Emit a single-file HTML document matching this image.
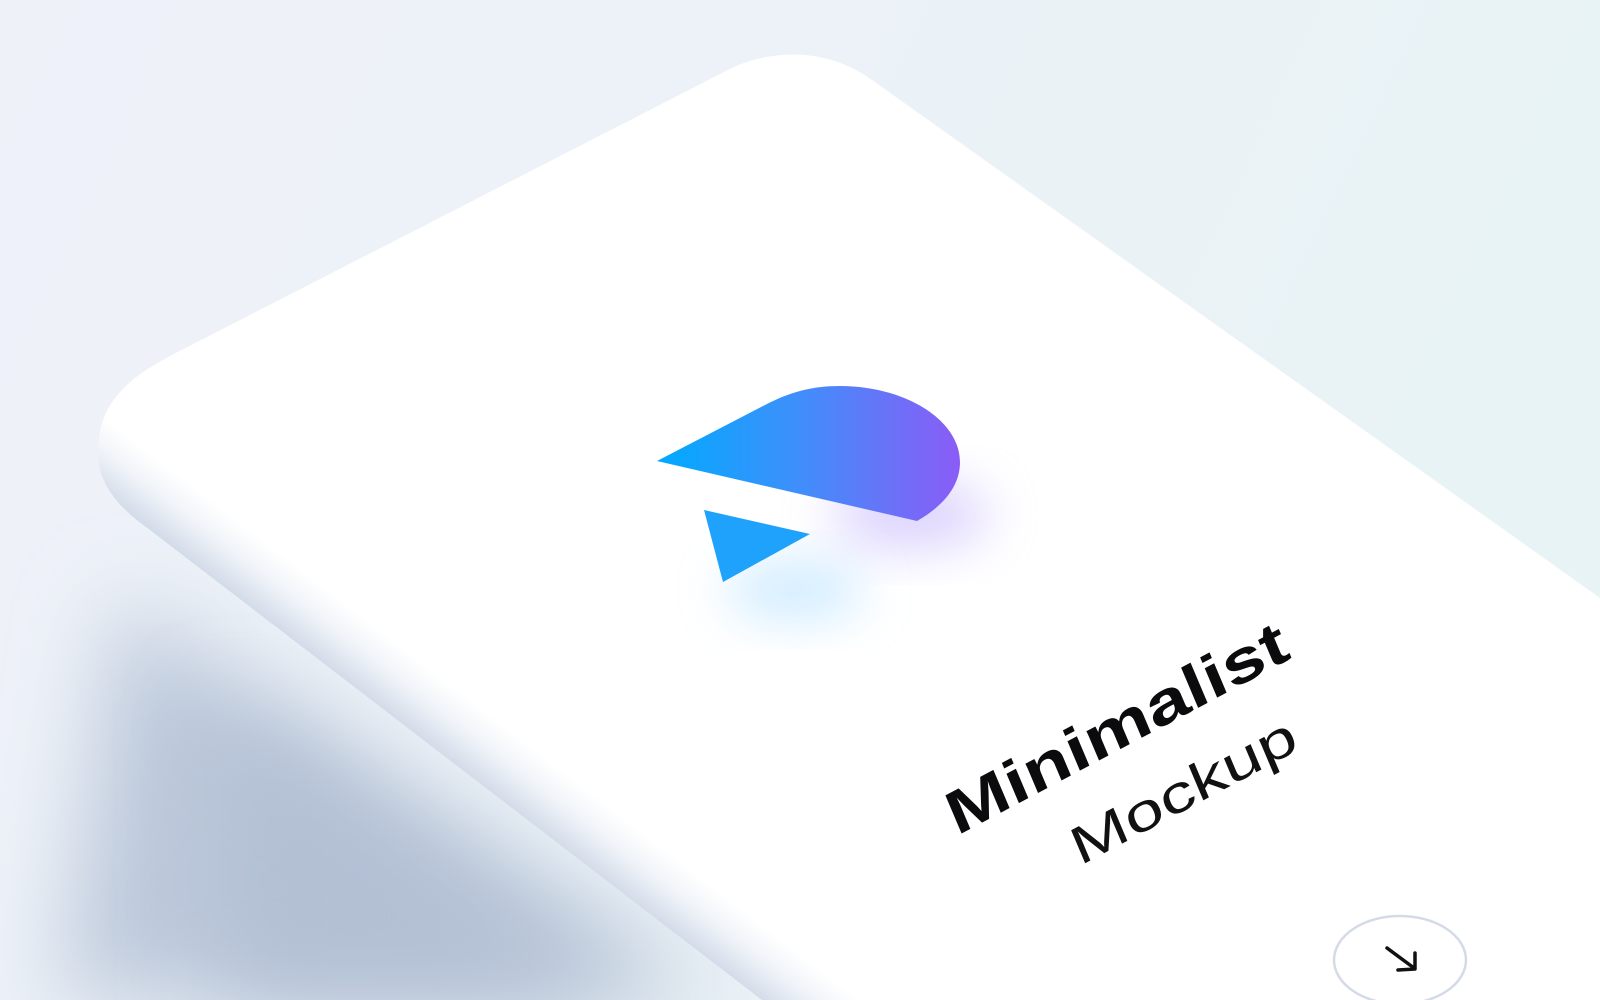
<!DOCTYPE html>
<html><head><meta charset="utf-8"><style>
html,body{margin:0;padding:0;width:1600px;height:1000px;overflow:hidden;background:#eef1f8}
svg{display:block}
</style></head><body>
<svg width="1600" height="1000" viewBox="0 0 1600 1000" xmlns="http://www.w3.org/2000/svg">
<defs>
<linearGradient id="bg" x1="0" y1="0" x2="1" y2="0.3">
<stop offset="0" stop-color="#eff1f9"/><stop offset="1" stop-color="#e8f3f5"/>
</linearGradient>
<linearGradient id="body" gradientUnits="userSpaceOnUse" x1="455" y1="765" x2="492" y2="717">
<stop offset="0" stop-color="#d2dbe8"/><stop offset="0.5" stop-color="#eef2f8"/><stop offset="1" stop-color="#ffffff"/>
</linearGradient>
<linearGradient id="logo" x1="0" y1="0" x2="1" y2="0">
<stop offset="0" stop-color="#00aaff"/><stop offset="0.45" stop-color="#3d90fb"/><stop offset="1" stop-color="#8a5cf6"/>
</linearGradient>
<filter id="b40" x="-50%" y="-50%" width="200%" height="200%"><feGaussianBlur stdDeviation="45"/></filter>
<filter id="b25" x="-50%" y="-50%" width="200%" height="200%"><feGaussianBlur stdDeviation="25"/></filter>
</defs>
<rect width="1600" height="1000" fill="url(#bg)"/>
<path d="M120 600 L720 1000 L60 1000 Z" fill="#bcc8da" filter="url(#b40)"/>
<path d="M220 700 L640 1000 L220 1000 Z" fill="#b2c0d4" filter="url(#b40)"/>
<path d="M98 452 C98 405 125 380 170 356 L720 74 C762 50 822 44 872 80 L1600 598 L1600 1000 L762 1000 L150 530 C115 505 98 482 98 452 Z" fill="url(#body)"/>
<ellipse cx="910" cy="515" rx="80" ry="35" fill="#b9a8fb" opacity="0.5" filter="url(#b25)"/>
<ellipse cx="795" cy="590" rx="70" ry="30" fill="#a9dcff" opacity="0.55" filter="url(#b25)"/>
<path d="M657 461 L765 405 C790 392 812 386 840 386 C905 386 960 420 960 462 C960 485 945 505 917 521 Z" fill="url(#logo)"/>
<path d="M704 510 L810 534 L723 582 Z" fill="#1fa2fb"/>
<g transform="translate(957,836) rotate(-28) skewX(-5)">
<text x="0" y="0" font-family="Liberation Sans, sans-serif" font-weight="bold" font-size="60" fill="#0b0b0d" textLength="380" lengthAdjust="spacingAndGlyphs">Minimalist</text>
</g>
<g transform="translate(1080,866) rotate(-28) skewX(-5)">
<text x="0" y="0" font-family="Liberation Sans, sans-serif" font-size="52" fill="#111" textLength="250" lengthAdjust="spacingAndGlyphs">Mockup</text>
</g>
<ellipse cx="1400" cy="960" rx="66" ry="44" fill="none" stroke="#d4dbe6" stroke-width="2.5"/>
<path d="M1387 948 L1414 968 M1398 970 L1415 969 L1415 953" stroke="#111" stroke-width="3.5" fill="none" stroke-linecap="round" stroke-linejoin="round"/>
</svg>
</body></html>
